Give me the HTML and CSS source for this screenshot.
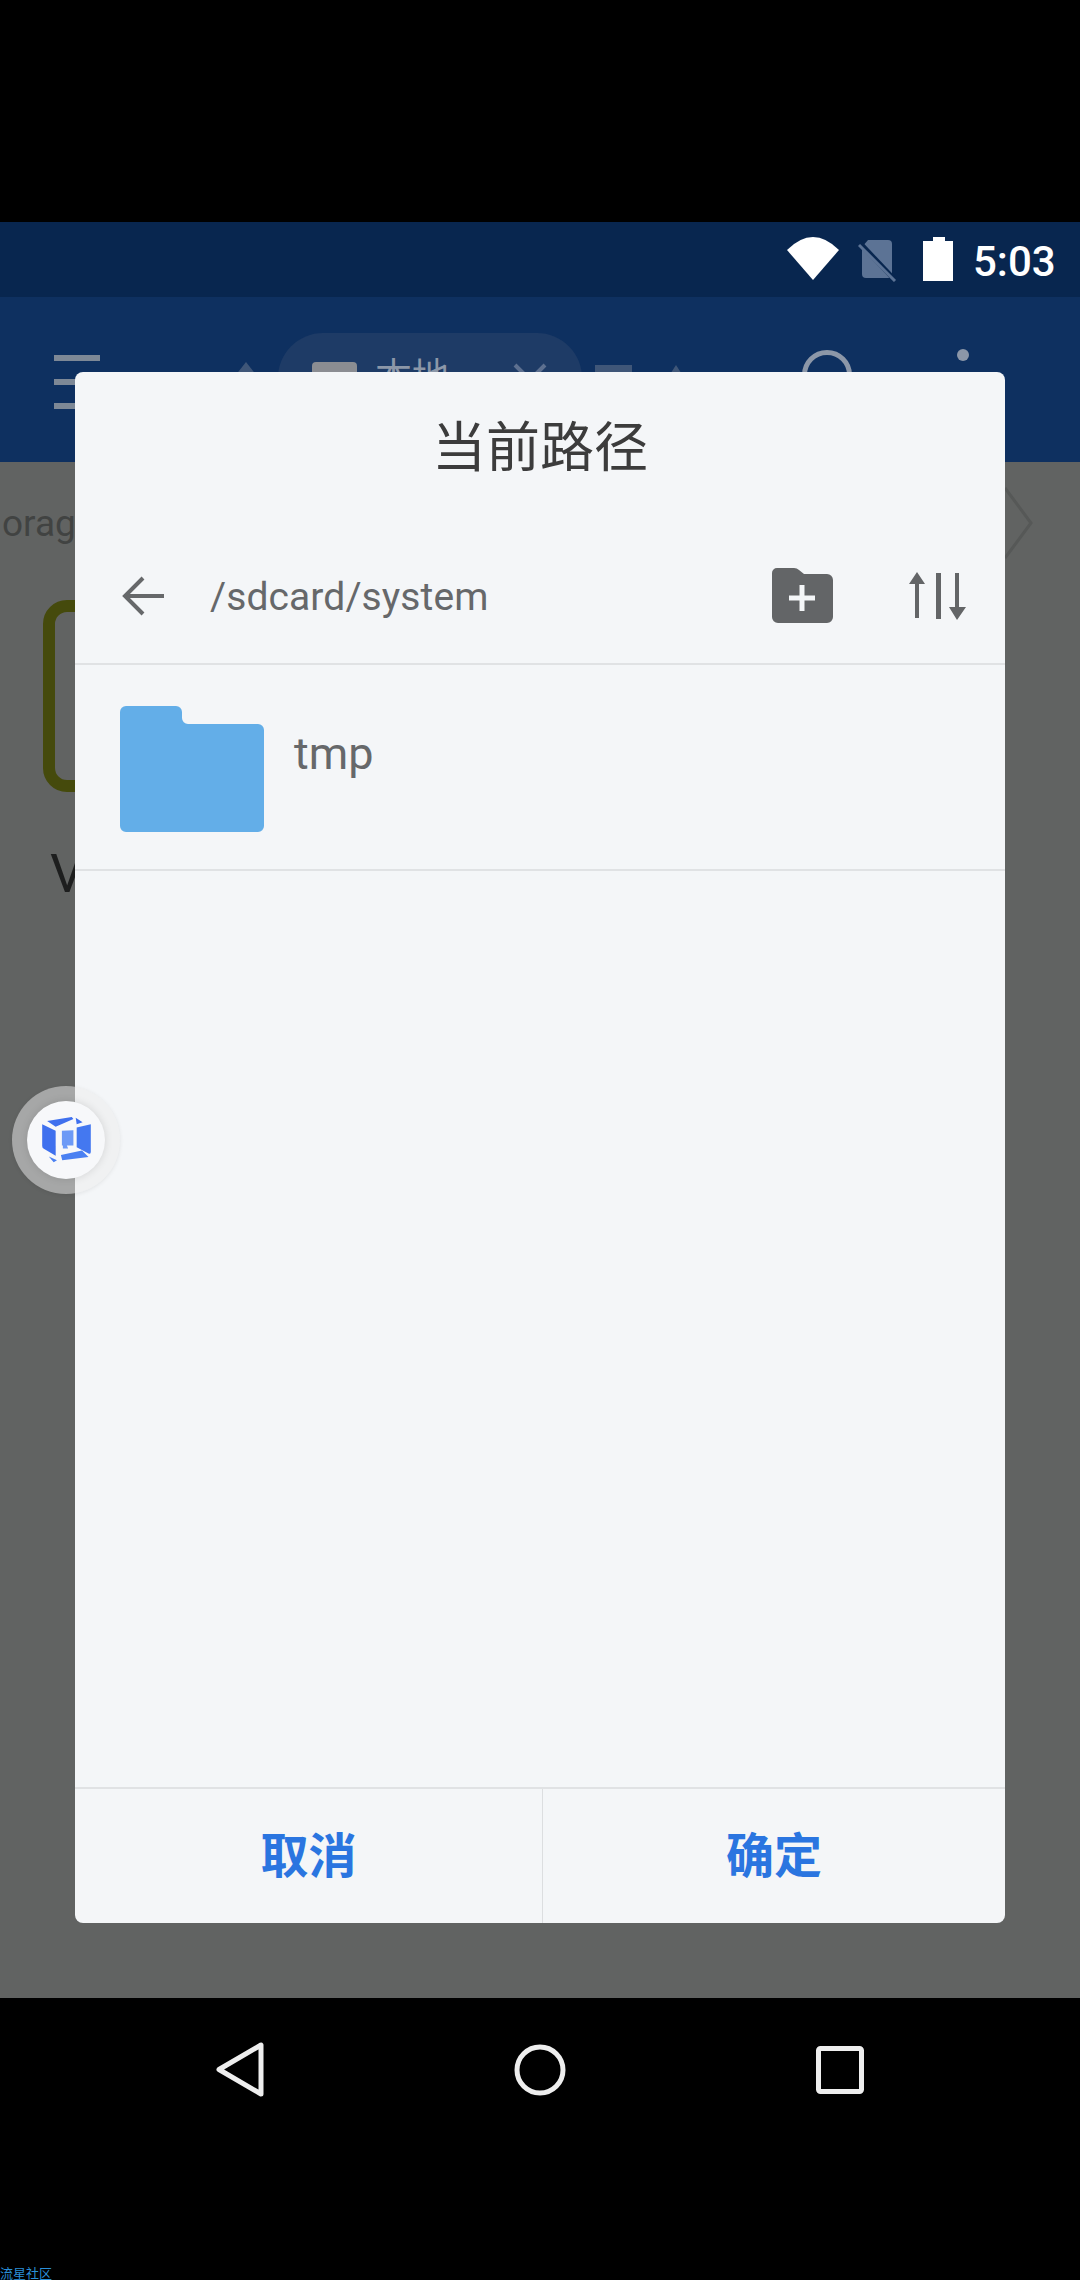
FILE: index.html
```html
<!DOCTYPE html>
<html>
<head>
    <meta charset="UTF-8">
    <title>当前路径</title>
    <link rel="stylesheet" href="styles.css">
</head>
<body>

<div class="top-black"></div>

<div class="status-bar">
    <svg class="ic-wifi" width="52" height="43" viewBox="0 0 52 43"><path d="M0 13 Q26 -13 52 13 L26 43 Z" fill="#fff"/></svg>
    <svg class="ic-sim" width="39" height="42" viewBox="0 0 39 42">
        <path d="M10 0 H30 a4 4 0 0 1 4 4 V34 a4 4 0 0 1 -4 4 H8 a4 4 0 0 1 -4 -4 V7 Z" fill="#5c7395"/>
        <path d="M0 1 L36 39" stroke="#08264f" stroke-width="5"/>
        <path d="M1 5 L37 41" stroke="#5c7395" stroke-width="3"/>
    </svg>
    <svg class="ic-battery" width="30" height="44" viewBox="0 0 30 44"><path d="M10 0 H22 V4 H30 V44 H0 V4 H10 Z" fill="#fff"/></svg>
    <span class="clock">5:03</span>
</div>

<div class="app-bar">
    <div class="menu"><i></i><i></i><i></i></div>
    <div class="tri-up"></div>
    <div class="tab-pill">
        <span class="tab-icon"></span>
        <span class="tab-text">本地</span>
        <svg class="tab-close" width="34" height="34" viewBox="0 0 34 34"><path d="M2 2 L32 32 M32 2 L2 32" stroke="#5d7090" stroke-width="4"/></svg>
    </div>
    <div class="tab-file"></div>
    <div class="tri-up small"></div>
    <div class="search"></div>
    <div class="more"></div>
</div>

<div class="content">
    <div class="crumb">
        <span class="crumb-text">orag</span>
        <svg width="28" height="72" viewBox="0 0 28 72"><path d="M0 1 L26 36 L0 71" fill="none" stroke="#565857" stroke-width="3"/></svg>
    </div>
    <div class="tile"></div>
    <div class="tile-name">V</div>
</div>

<div class="nav-bar">
    <div class="nav-keys">
        <svg width="48" height="55" viewBox="0 0 48 55"><path d="M45 3 V52 L3 27.5 Z" fill="none" stroke="#eee" stroke-width="5" stroke-linejoin="round"/></svg>
        <svg width="52" height="52" viewBox="0 0 52 52"><circle cx="26" cy="26" r="23" fill="none" stroke="#eee" stroke-width="5"/></svg>
        <svg width="48" height="48" viewBox="0 0 48 48"><rect x="2.5" y="2.5" width="43" height="43" rx="2" fill="none" stroke="#eee" stroke-width="5"/></svg>
    </div>
    <div class="watermark">流星社区</div>
</div>

<div class="dialog">
    <div class="dialog-title">当前路径</div>
    <div class="path-row">
        <svg class="ic-back" width="42" height="40" viewBox="0 0 42 40"><path d="M42 20 H3 M21 2 L3 20 L21 38" fill="none" stroke="#66686a" stroke-width="4"/></svg>
        <span class="path-text">/sdcard/system</span>
        <svg class="ic-newfolder" width="61" height="55" viewBox="0 0 61 55">
            <path d="M5 0 H22 Q25 0 27 2 L32 6 H55 a6 6 0 0 1 6 6 V49 a6 6 0 0 1 -6 6 H6 a6 6 0 0 1 -6 -6 V5 a5 5 0 0 1 5 -5 Z" fill="#636567"/>
            <path d="M30 17 V43 M17 30 H43" stroke="#f4f6f8" stroke-width="5"/>
        </svg>
        <svg class="ic-sort" width="57" height="48" viewBox="0 0 57 48">
            <path d="M8 0 L16 12 H10 V46 H6 V12 H0 Z M27 1 H32 V47 H27 Z M46 1 H50 V35 H57 L48 48 L40 35 H46 Z" fill="#636567"/>
        </svg>
    </div>
    <div class="file-row">
        <svg class="ic-folder" width="144" height="126" viewBox="0 0 144 126"><path d="M6 0 H56 a6 6 0 0 1 6 6 V12 a6 6 0 0 0 6 6 H138 a6 6 0 0 1 6 6 V120 a6 6 0 0 1 -6 6 H6 a6 6 0 0 1 -6 -6 V6 a6 6 0 0 1 6 -6 Z" fill="#63aee8"/></svg>
        <span class="file-name">tmp</span>
    </div>
    <div class="dialog-space"></div>
    <div class="dialog-btns">
        <div class="btn">取消</div>
        <div class="btn">确定</div>
    </div>
</div>

<div class="float-ball">
    <div class="float-inner">
        <svg width="49" height="46" viewBox="95 98 148 140">
            <path d="M110 110 L185 98 L190 104 L136 128 Z M197 100 L218 114 L200 120 Z" fill="#3f70ee"/>
            <path d="M95 120 L136 140 V216 L100 195 Q95 192 95 186 Z" fill="#3f70ee"/>
            <path d="M200 130 L243 120 V204 Q243 212 236 209 L200 190 Z" fill="#4478f0"/>
            <path d="M155 140 L190 138 V185 H170 L174 194 H158 V185 H155 Z" fill="#6d9af6"/>
            <path d="M115 218 L140 230 L130 236 Z M152 214 L216 200 L236 220 L156 230 Z" fill="#4a80f2"/>
        </svg>
    </div>
</div>

</body>
</html>
```

FILE: styles.css
```css
* {
    margin: 0;
    padding: 0;
    box-sizing: border-box;
}

body {
    position: relative;
    width: 1080px;
    height: 2280px;
    overflow: hidden;
    background: #000;
    font-family: Roboto, "Noto Sans CJK SC", sans-serif;
}

.top-black {
    height: 222px;
}

/* status bar */
.status-bar {
    display: flex;
    align-items: flex-start;
    height: 75px;
    padding: 15px 0 0 787px;
    background: #08264f;
}

.ic-sim {
    margin: 3px 0 0 19px;
}

.ic-battery {
    margin-left: 26px;
}

.clock {
    margin-left: 20px;
    color: #fff;
    font-size: 42px;
    font-weight: 500;
    line-height: 49px;
}

/* dimmed page under the dialog */
.app-bar {
    display: flex;
    align-items: flex-start;
    height: 165px;
    padding-left: 54px;
    background: #0e3060;
}

.menu {
    width: 46px;
    padding-top: 58px;
}

.menu i {
    display: block;
    height: 6px;
    margin-bottom: 18px;
    background: #7d8896;
}

.tri-up {
    margin: 65px 0 0 135px;
    border-left: 11px solid transparent;
    border-right: 11px solid transparent;
    border-bottom: 14px solid #3f5678;
}

.tri-up.small {
    margin: 68px 0 0 35px;
    border-left-width: 9px;
    border-right-width: 9px;
}

.tab-pill {
    display: flex;
    align-items: flex-start;
    width: 304px;
    height: 90px;
    margin: 36px 0 0 21px;
    padding: 29px 0 0 34px;
    border-radius: 45px;
    background: #1e3b66;
}

.tab-icon {
    width: 45px;
    height: 40px;
    border-radius: 4px;
    background: #8b8d92;
}

.tab-text {
    margin: -4px 0 0 18px;
    color: #8c97a8;
    font-size: 37px;
    line-height: 40px;
}

.tab-close {
    margin: 1px 0 0 64px;
}

.tab-file {
    width: 37px;
    height: 40px;
    margin: 68px 0 0 13px;
    background: #3f5678;
}

.search {
    width: 50px;
    height: 50px;
    margin: 53px 0 0 117px;
    border: 5px solid #8c97a8;
    border-radius: 50%;
}

.more {
    width: 12px;
    height: 12px;
    margin: 52px 0 0 105px;
    border-radius: 50%;
    background: #8c97a8;
}

.content {
    height: 1536px;
    background: #616362;
    overflow: hidden;
}

.crumb {
    display: flex;
    justify-content: space-between;
    align-items: center;
    height: 122px;
    padding: 0 47px 0 2px;
}

.crumb-text {
    color: #414342;
    font-size: 37px;
}

.tile {
    width: 100px;
    height: 192px;
    margin: 16px 0 0 43px;
    border: 12px solid #454a0c;
    border-radius: 24px;
}

.tile-name {
    margin: 50px 0 0 50px;
    color: #1d1e1e;
    font-size: 54px;
    line-height: 64px;
}

/* navigation keys */
.nav-bar {
    height: 282px;
}

.nav-keys {
    display: flex;
    align-items: center;
    height: 99px;
    padding: 44px 0 0 216px;
    gap: 250px;
}

.watermark {
    margin-top: 171px;
    color: #2a8fd8;
    font-size: 13px;
    line-height: 12px;
}

/* dialog */
.dialog {
    position: absolute;
    top: 372px;
    left: 75px;
    display: flex;
    flex-direction: column;
    width: 930px;
    height: 1551px;
    border-radius: 8px;
    background: #f4f6f8;
    overflow: hidden;
}

.dialog-title {
    height: 148px;
    color: #3c3c3c;
    font-size: 54px;
    line-height: 154px;
    text-align: center;
}

.path-row {
    display: flex;
    align-items: center;
    height: 145px;
    padding: 8px 39px 0 47px;
    border-bottom: 2px solid #e0e2e4;
}

.path-text {
    flex: 1;
    margin: 3px 0 0 46px;
    color: #66686a;
    font-size: 39px;
    letter-spacing: 0.1px;
}

.ic-sort {
    margin-left: 76px;
}

.file-row {
    display: flex;
    align-items: flex-start;
    height: 206px;
    padding: 41px 0 0 45px;
    border-bottom: 2px solid #e0e2e4;
}

.file-name {
    margin: 18px 0 0 30px;
    color: #66686a;
    font-size: 45px;
    line-height: 60px;
}

.dialog-space {
    flex: 1;
}

.dialog-btns {
    display: grid;
    grid-template-columns: 467px 1fr;
    height: 136px;
    border-top: 2px solid #e0e2e4;
}

.btn {
    color: #2a75e0;
    font-size: 48px;
    font-weight: 700;
    line-height: 136px;
    text-align: center;
}

.btn + .btn {
    border-left: 1px solid #dcdee0;
}

/* floating ball, sits over page and dialog */
.float-ball {
    position: absolute;
    top: 1086px;
    left: 12px;
    display: flex;
    justify-content: center;
    align-items: center;
    width: 108px;
    height: 108px;
    border-radius: 50%;
    background: rgba(235, 235, 235, 0.5);
    box-shadow: 0 1px 4px rgba(0, 0, 0, 0.08);
}

.float-inner {
    display: flex;
    justify-content: center;
    align-items: center;
    width: 78px;
    height: 78px;
    border-radius: 50%;
    background: #f7f8fa;
    box-shadow: 0 0 8px rgba(0, 0, 0, 0.12);
}
```
